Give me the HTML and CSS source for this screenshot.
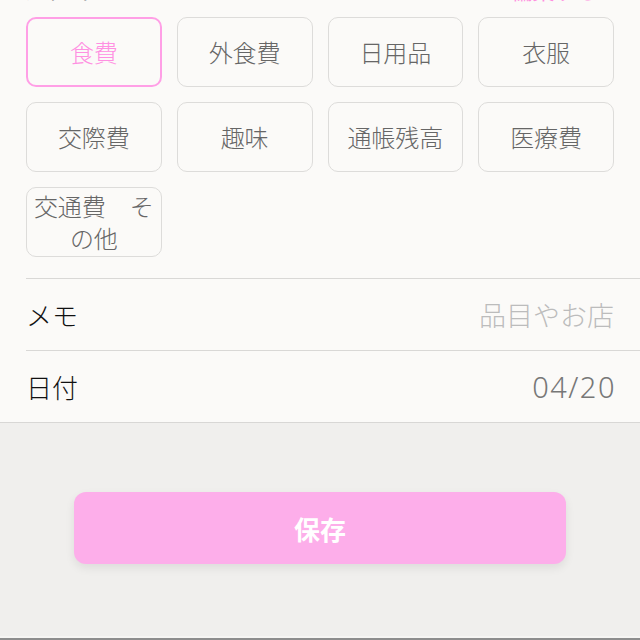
FILE: index.html
```html
<!DOCTYPE html>
<html lang="ja">
<head>
    <meta charset="UTF-8">
    <meta name="viewport" content="width=device-width, initial-scale=1.0">
    <title>支出入力</title>
    <link rel="stylesheet" href="styles.css">
</head>
<body>
    <div class="page">
        <div class="panel">
            <div class="section-head">
                <span class="section-title">カテゴリー</span>
                <span class="section-edit">編集する ›</span>
            </div>

            <div class="category-grid">
                <button class="category selected">食費</button>
                <button class="category">外食費</button>
                <button class="category">日用品</button>
                <button class="category">衣服</button>
                <button class="category">交際費</button>
                <button class="category">趣味</button>
                <button class="category">通帳残高</button>
                <button class="category">医療費</button>
                <button class="category">交通費　その他</button>
            </div>

            <div class="field">
                <label class="field-label" for="memo">メモ</label>
                <input class="field-input" type="text" id="memo" placeholder="品目やお店">
            </div>
            <div class="field">
                <span class="field-label">日付</span>
                <span class="field-value">04/20</span>
            </div>
        </div>

        <div class="save-area">
            <button class="save-button">保存</button>
        </div>

        <div class="tabbar"></div>
    </div>
</body>
</html>
```

FILE: styles.css
```css
body {
    margin: 0;
    font-family: "Noto Sans CJK JP", "Noto Sans", sans-serif;
    background: #f0efed;
}
.page {
    display: flex;
    flex-direction: column;
    height: 640px;
    overflow: hidden;
}
.panel {
    background: #fbfaf8;
    border-bottom: 1px solid #d8d7d5;
}
.section-head {
    display: flex;
    justify-content: space-between;
    align-items: flex-end;
    margin-top: -25px;
    padding: 0 30px 0 24px;
    height: 28px;
    font-size: 22px;
    line-height: 28px;
}
.section-title {
    color: #777;
}
.section-edit {
    color: #ff8fe0;
}
.category-grid {
    display: grid;
    grid-template-columns: repeat(4, 1fr);
    gap: 15px;
    padding: 0 26px;
    margin-top: 14px;
}
.category {
    display: flex;
    align-items: center;
    justify-content: center;
    height: 70px;
    padding: 0 3px;
    border: 1px solid #dddcda;
    border-radius: 10px;
    background: #fbfaf8;
    color: #666;
    font-family: inherit;
    font-size: 24px;
    font-weight: 300;
    line-height: 32px;
    text-align: center;
}
.category.selected {
    border: 2px solid #ff9fe6;
    color: #ff90e2;
}
.field {
    display: flex;
    align-items: center;
    justify-content: space-between;
    height: 71px;
    margin-left: 26px;
    padding-right: 24px;
    border-top: 1px solid #d9d8d6;
}
.category-grid + .field {
    margin-top: 21px;
}
.field-label {
    color: #111;
    font-size: 26px;
    font-weight: 300;
}
.field-input {
    width: 260px;
    border: none;
    background: transparent;
    font-family: inherit;
    font-size: 27px;
    font-weight: 300;
    text-align: right;
    outline: none;
}
.field-input::placeholder {
    color: #bcbcbc;
}
.field-value {
    color: #777;
    font-family: "Noto Sans", sans-serif;
    font-size: 29px;
    font-weight: 300;
    letter-spacing: 1.5px;
}
.save-area {
    padding: 69px 74px 0;
}
.save-button {
    width: 100%;
    height: 72px;
    border: none;
    border-radius: 12px;
    background: #fdaeea;
    box-shadow: 0 4px 10px rgba(0, 0, 0, 0.08);
    color: #fff;
    font-family: inherit;
    font-size: 26px;
    font-weight: bold;
}
.tabbar {
    margin-top: auto;
    height: 2px;
    border-top: 2px solid #f6f5f3;
    background: #8d8d8d;
}
```
